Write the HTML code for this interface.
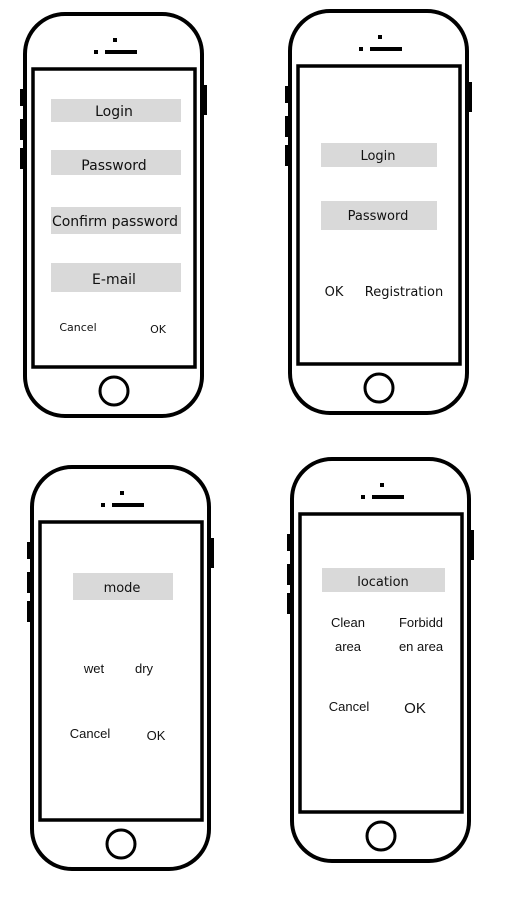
<!DOCTYPE html>
<html><head><style>
html,body{margin:0;padding:0;background:#fff;}
svg{display:block}
text{font-family:"DejaVu Sans","Liberation Sans",sans-serif;fill:#111;}
.n{font-family:"Liberation Sans",sans-serif;}
</style></head><body>
<svg width="524" height="904" viewBox="0 0 524 904" xmlns="http://www.w3.org/2000/svg">
<defs>
<g id="phone">
  <rect x="0" y="0" width="177" height="402" rx="40" fill="#fff" stroke="#000" stroke-width="4"/>
  <rect x="8" y="55" width="162" height="298" fill="#fff" stroke="#000" stroke-width="3.5"/>
  <rect x="-5" y="75" width="5" height="17" fill="#000"/>
  <rect x="-5" y="105" width="5" height="21" fill="#000"/>
  <rect x="-5" y="134" width="5" height="21" fill="#000"/>
  <rect x="177" y="71" width="5" height="30" fill="#000"/>
  <rect x="88" y="24" width="4" height="4" fill="#000"/>
  <rect x="69" y="36" width="4" height="4" fill="#000"/>
  <rect x="80" y="36" width="32" height="4" fill="#000"/>
  <circle cx="89" cy="377" r="14" fill="none" stroke="#000" stroke-width="3"/>
</g>
</defs>

<!-- Phone 1 -->
<use href="#phone" x="25" y="14"/>
<rect x="51" y="99" width="130" height="23" fill="#d9d9d9"/>
<rect x="51" y="150" width="130" height="25" fill="#d9d9d9"/>
<rect x="51" y="207" width="130" height="27" fill="#d9d9d9"/>
<rect x="51" y="263" width="130" height="29" fill="#d9d9d9"/>
<text x="114" y="116" font-size="14" text-anchor="middle">Login</text>
<text x="114" y="170" font-size="14" text-anchor="middle">Password</text>
<svg x="51" y="207" width="130" height="27"><text x="64" y="19" font-size="14" text-anchor="middle">Confirm password</text></svg>
<text x="114" y="284" font-size="14" text-anchor="middle">E-mail</text>
<text x="78" y="331" font-size="11" text-anchor="middle">Cancel</text>
<text x="158" y="333" font-size="11" text-anchor="middle">OK</text>

<!-- Phone 2 -->
<use href="#phone" x="290" y="11"/>
<rect x="321" y="143" width="116" height="24" fill="#d9d9d9"/>
<rect x="321" y="201" width="116" height="29" fill="#d9d9d9"/>
<text x="378" y="160" font-size="13" text-anchor="middle">Login</text>
<text x="378" y="220" font-size="13" text-anchor="middle">Password</text>
<text x="334" y="296" font-size="13" text-anchor="middle">OK</text>
<text x="404" y="296" font-size="13" text-anchor="middle">Registration</text>

<!-- Phone 3 -->
<use href="#phone" x="32" y="467"/>
<rect x="73" y="573" width="100" height="27" fill="#d9d9d9"/>
<text x="122" y="592" font-size="13" text-anchor="middle">mode</text>
<text class="n" x="94" y="673" font-size="13" text-anchor="middle">wet</text>
<text class="n" x="144" y="673" font-size="13" text-anchor="middle">dry</text>
<text class="n" x="90" y="738" font-size="13" text-anchor="middle">Cancel</text>
<text class="n" x="156" y="740" font-size="13" text-anchor="middle">OK</text>

<!-- Phone 4 -->
<use href="#phone" x="292" y="459"/>
<rect x="322" y="568" width="123" height="24" fill="#d9d9d9"/>
<text x="383" y="586" font-size="13" text-anchor="middle">location</text>
<text class="n" x="348" y="627" font-size="13" text-anchor="middle">Clean</text>
<text class="n" x="348" y="651" font-size="13" text-anchor="middle">area</text>
<text class="n" x="421" y="627" font-size="13" text-anchor="middle">Forbidd</text>
<text class="n" x="421" y="651" font-size="13" text-anchor="middle">en area</text>
<text class="n" x="349" y="711" font-size="13" text-anchor="middle">Cancel</text>
<text class="n" x="415" y="713" font-size="15" text-anchor="middle">OK</text>
</svg>
</body></html>
